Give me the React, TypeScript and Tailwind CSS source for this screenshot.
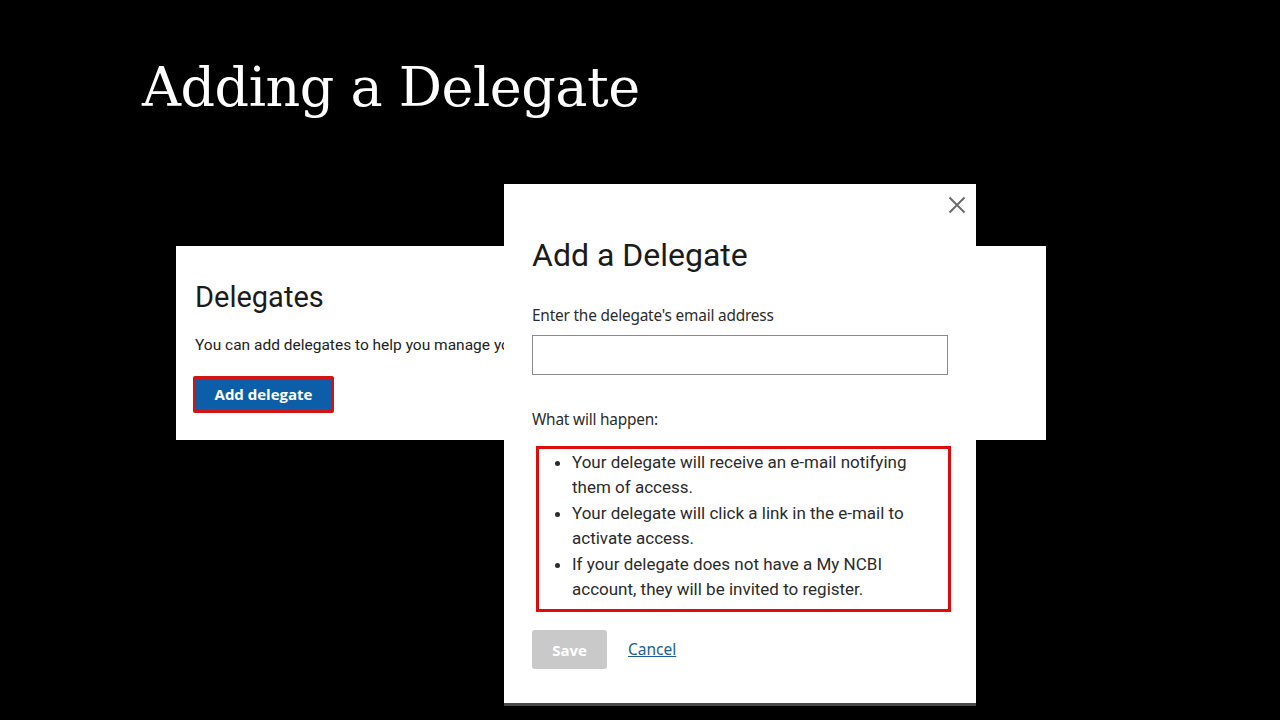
import React from "react";

const items = [
  "Your delegate will receive an e-mail notifying them of access.",
  "Your delegate will click a link in the e-mail to activate access.",
  "If your delegate does not have a My NCBI account, they will be invited to register.",
];

const App: React.FC = () => {
  return (
    <div className="relative w-[1280px] h-[720px] bg-black overflow-hidden">
      <h1 className="pl-[142px] pt-[52px] text-white text-[54px] leading-[72px] font-['DejaVu_Serif',serif] tracking-[-0.5px]">
        Adding a Delegate
      </h1>

      {/* delegates page screenshot */}
      <div className="absolute left-[176px] top-[246px] w-[870px] h-[194px] bg-white pl-[17px] pt-[34px] font-['Roboto',sans-serif]">
        <h2 className="pl-[2px] text-[29px] leading-[34px] text-[#1b1b1b]">Delegates</h2>
        <p className="pl-[2px] mt-[21px] text-[15.5px] leading-[20px] text-[#222] whitespace-nowrap">
          You can add delegates to help you manage your account
        </p>
        <div className="mt-[21px] inline-block border-[3px] border-[#d41414] rounded-[2px]">
          <button className="block w-[135px] h-[31px] bg-[#0d5ea8] text-white text-[15px] font-bold font-['Open_Sans',sans-serif]">
            Add delegate
          </button>
        </div>
      </div>

      {/* dialog screenshot */}
      <div className="absolute left-[504px] top-[184px] w-[472px] h-[522px] bg-white border-b-[3px] border-[#4a4a4a] pl-[28px] pr-[28px]">
        <div className="flex justify-end pt-[10px] -mr-[20px]">
          <svg width="22" height="22" viewBox="0 0 22 22" className="text-[#6b6b6b]">
            <path d="M3.5 3.5 L18.5 18.5 M18.5 3.5 L3.5 18.5" stroke="currentColor" strokeWidth="2" />
          </svg>
        </div>
        <h2 className="mt-[21px] text-[32px] leading-[36px] text-[#1b1b1b] font-['Roboto',sans-serif]">
          Add a Delegate
        </h2>
        <p className="mt-[33px] text-[15.4px] leading-[20px] text-[#2b2b2b] font-['Noto_Sans',sans-serif] tracking-[-0.2px]">
          Enter the delegate's email address
        </p>
        <input className="mt-[9px] block w-[416px] h-[40px] border border-[#8a8a8a] outline-none" />
        <p className="mt-[35px] text-[15.4px] leading-[20px] text-[#2b2b2b] font-['Noto_Sans',sans-serif] tracking-[-0.2px]">
          What will happen:
        </p>
        <div className="mt-[16px] ml-[4px] w-[415px] border-[3px] border-[#e00b0b] pl-[31px] pr-[30px] pt-[1px] pb-[7px]">
          <ul className="list-disc pl-[2px] text-[17px] leading-[25.4px] text-[#2b2b2b] font-['Roboto',sans-serif]">
            {items.map((t) => (
              <li key={t}>{t}</li>
            ))}
          </ul>
        </div>
        <div className="mt-[18px] flex items-center gap-[21px]">
          <button className="w-[75px] h-[39px] rounded-[3px] bg-[#c9c9c9] text-white text-[15px] font-bold font-['Open_Sans',sans-serif]">
            Save
          </button>
          <a className="text-[15.5px] text-[#205d98] underline font-['Noto_Sans',sans-serif]">Cancel</a>
        </div>
      </div>
    </div>
  );
};

export default App;
